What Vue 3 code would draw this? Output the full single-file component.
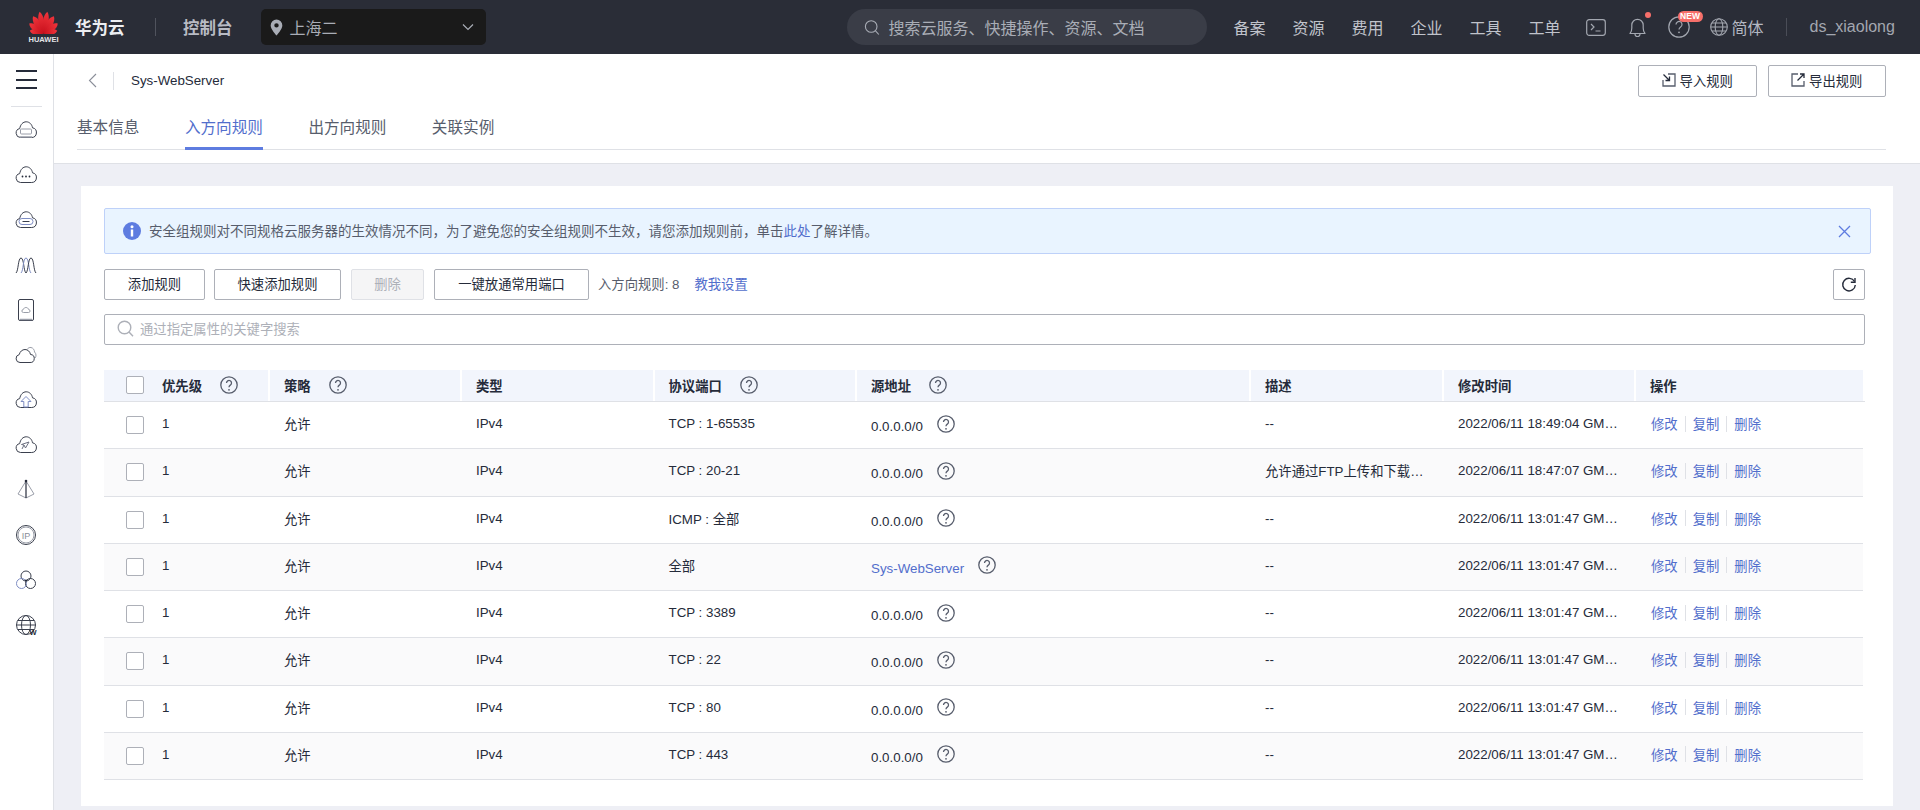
<script setup>
const navItems = ['备案', '资源', '费用', '企业', '工具', '工单']
const tabs = [
  { label: '基本信息' },
  { label: '入方向规则', active: true },
  { label: '出方向规则' },
  { label: '关联实例' }
]
const heads = [
  { label: '优先级', help: true, check: true },
  { label: '策略', help: true },
  { label: '类型' },
  { label: '协议端口', help: true },
  { label: '源地址', help: true },
  { label: '描述' },
  { label: '修改时间' },
  { label: '操作' }
]
const t = '2022/06/11 13:01:47 GM…'
const rules = [
  { port: 'TCP : 1-65535', source: '0.0.0.0/0', desc: '--', time: '2022/06/11 18:49:04 GM…' },
  { port: 'TCP : 20-21', source: '0.0.0.0/0', desc: '允许通过FTP上传和下载…', time: '2022/06/11 18:47:07 GM…' },
  { port: 'ICMP : 全部', source: '0.0.0.0/0', desc: '--', time: t },
  { port: '全部', source: 'Sys-WebServer', link: true, desc: '--', time: t },
  { port: 'TCP : 3389', source: '0.0.0.0/0', desc: '--', time: t },
  { port: 'TCP : 22', source: '0.0.0.0/0', desc: '--', time: t },
  { port: 'TCP : 80', source: '0.0.0.0/0', desc: '--', time: t },
  { port: 'TCP : 443', source: '0.0.0.0/0', desc: '--', time: t }
]
const petals = [
  { a: -78, l: 14.5, w: 3.8 },
  { a: -55, l: 18, w: 4.2 },
  { a: -31, l: 21, w: 4.4 },
  { a: -10, l: 23, w: 3.8 },
  { a: 10, l: 23, w: 3.8 },
  { a: 31, l: 21, w: 4.4 },
  { a: 55, l: 18, w: 4.2 },
  { a: 78, l: 14.5, w: 3.8 }
]
const petalPath = (p) => `M15 24C${15 - p.w} ${24 - p.l * 0.45} ${15 - p.w} ${24 - p.l * 0.8} 15 ${24 - p.l}C${15 + p.w} ${24 - p.l * 0.8} ${15 + p.w} ${24 - p.l * 0.45} 15 24Z`
const cloud = 'M6.500 19.500a4.500 4.500 0 0 1-.8-8.900C6.400 6.500 9 3.800 12.200 3.800c3.300 0 5.800 2.600 6.300 6a4.900 4.900 0 0 1-.8 9.700Z'
</script>

<template>
  <div class="app">
    <header class="topbar">
      <div class="logo">
        <svg class="flower" viewBox="0 0 30 24" width="29" height="24">
          <defs>
            <linearGradient id="petal" x1="0" y1="0" x2="0" y2="1">
              <stop offset="0" stop-color="#f0353c" />
              <stop offset="1" stop-color="#c8101c" />
            </linearGradient>
          </defs>
          <path v-for="p in petals" :key="p.a" :d="petalPath(p)" fill="url(#petal)" :transform="`rotate(${p.a} 15 24)`" />
        </svg>
        <span class="logo-word">HUAWEI</span>
      </div>
      <span class="brand">华为云</span>
      <i class="vline brand-line"></i>
      <span class="console">控制台</span>
      <div class="region">
        <svg viewBox="0 0 14 18" width="13" height="17"><path fill="#a9adb6" d="M7 0.500a6.300 6.300 0 0 0-6.300 6.300C.7 11 7 17.500 7 17.500s6.300-6.500 6.300-10.700A6.300 6.300 0 0 0 7 .5Zm0 8.600a2.400 2.400 0 1 1 0-4.800 2.400 2.400 0 0 1 0 4.800Z" /></svg>
        <span class="region-name">上海二</span>
        <svg class="chev" viewBox="0 0 12 8" width="12" height="8"><path d="M1 1.500l5 5 5-5" fill="none" stroke="#a9adb6" stroke-width="1.200" /></svg>
      </div>
      <div class="global-search">
        <svg viewBox="0 0 16 16" width="16" height="17"><circle cx="7.200" cy="7" r="5.800" fill="none" stroke="#a9adb6" stroke-width="1.100" /><path d="M11.500 11.300l3.300 3.700" stroke="#a9adb6" stroke-width="1.100" /></svg>
        <span>搜索云服务、快捷操作、资源、文档</span>
      </div>
      <nav class="nav">
        <a v-for="n in navItems" :key="n">{{ n }}</a>
      </nav>
      <svg class="term" viewBox="0 0 20 17" width="20" height="17">
        <rect x=".7" y=".7" width="18.600" height="15.600" rx="2.500" fill="none" stroke="#a3a7b0" stroke-width="1.200" />
        <path d="M5 5l3 3-3 3M9.500 12h5" fill="none" stroke="#a3a7b0" stroke-width="1.200" />
      </svg>
      <span class="bell">
        <svg viewBox="0 0 19 21" width="19" height="21">
          <path d="M2 16.500c1.500-1.500 1.800-3 1.800-5.500V8a5.700 5.700 0 0 1 11.400 0v3c0 2.500.3 4 1.800 5.500Z" fill="none" stroke="#a3a7b0" stroke-width="1.200" stroke-linejoin="round" />
          <path d="M7 17a2.500 2.500 0 0 0 5 0" fill="none" stroke="#a3a7b0" stroke-width="1.200" />
        </svg>
        <i class="dot"></i>
      </span>
      <span class="help-top">
        <svg viewBox="0 0 22 22" width="22" height="22">
          <circle cx="11" cy="11" r="10.200" fill="none" stroke="#a3a7b0" stroke-width="1.200" />
          <path d="M8 8.500a3 3 0 1 1 4.600 2.500c-1 .7-1.600 1.300-1.600 2.500" fill="none" stroke="#a3a7b0" stroke-width="1.200" />
          <circle cx="11" cy="16.300" r=".9" fill="#a3a7b0" />
        </svg>
        <b class="new">NEW</b>
      </span>
      <svg class="globe" viewBox="0 0 18 18" width="18" height="18">
        <g fill="none" stroke="#a3a7b0" stroke-width="1.100">
          <circle cx="9" cy="9" r="8.300" />
          <ellipse cx="9" cy="9" rx="3.800" ry="8.300" />
          <path d="M.7 9h16.600M1.800 5h14.400M1.800 13h14.400" />
        </g>
      </svg>
      <span class="lang">简体</span>
      <i class="vline user-line"></i>
      <span class="user">ds_xiaolong</span>
    </header>

    <div class="body">
      <aside class="sidebar">
        <div class="burger"><i></i><i></i><i></i></div>
        <div class="side-icon">
          <svg viewBox="0 0 24 24" width="24" height="24"><path :d="cloud" class="so" /><rect x="6.500" y="11" width="11" height="5" rx="1" class="si" /><path d="M6 19h12" class="si thick" /></svg>
        </div>
        <div class="side-icon">
          <svg viewBox="0 0 24 24" width="24" height="24"><path :d="cloud" class="so" /><circle cx="8.500" cy="13.500" r=".9" class="fd" /><circle cx="12" cy="13.500" r=".9" class="fd" /><circle cx="15.500" cy="13.500" r=".9" class="fd" /></svg>
        </div>
        <div class="side-icon">
          <svg viewBox="0 0 24 24" width="24" height="24"><path :d="cloud" class="so" /><rect x="5" y="10.500" width="14" height="6" rx="3" class="sb" /><path d="M8.500 13.500h7" class="sd" /></svg>
        </div>
        <div class="side-icon">
          <svg viewBox="0 0 24 24" width="24" height="24"><path d="M2 20c2.500-2 2-15 5-15s2.500 13 5 15" class="so" /><path d="M7 20c2.500-2 2-15 5-15s2.500 13 5 15" class="sb" /><path d="M12 20c2.500-2 2-15 5-15s2.500 13 5 15" class="so" /></svg>
        </div>
        <div class="side-icon">
          <svg viewBox="0 0 24 24" width="24" height="24"><rect x="4.500" y="1.500" width="15" height="21" rx="1.500" class="so" /><path d="M9.500 14.500a1.500 1.500 0 0 1-.2-3c.4-1.400 1.500-2 2.700-2s2.300.7 2.600 2a1.500 1.500 0 0 1-.1 3Z" class="si" /><path d="M6 21.500h12" class="si thick" /></svg>
        </div>
        <div class="side-icon">
          <svg viewBox="0 0 24 24" width="24" height="24"><path d="M13 6.500c1-1.500 2.500-2.300 4-2 2.300.5 3.500 2.500 3.500 4.500 1.800 1.500 2 4.500.5 6" class="si" /><path d="M6 19.500a4 4 0 0 1-.8-7.900C6 8.500 8.300 6.500 11 6.500s5 2 5.500 5a4 4 0 0 1-.5 8Z" class="so" /></svg>
        </div>
        <div class="side-icon">
          <svg viewBox="0 0 24 24" width="24" height="24"><path :d="cloud" class="so" /><path d="M12 8.500l-5 5h2.800V19h4.400v-5.500H17Z" class="sb" /></svg>
        </div>
        <div class="side-icon">
          <svg viewBox="0 0 24 24" width="24" height="24"><path :d="cloud" class="so" /><path d="M7.500 11.500L15 9l-3.500 6-1.500-3Zm2.500.500l-2 4" class="sg" /></svg>
        </div>
        <div class="side-icon">
          <svg viewBox="0 0 24 24" width="24" height="24"><path d="M12 3L4 16l8 4 8-4Z" class="si" /><path d="M12 3v17" class="so strong" /><circle cx="12" cy="3" r="1.300" class="fd" /></svg>
        </div>
        <div class="side-icon">
          <svg viewBox="0 0 24 24" width="24" height="24"><circle cx="12" cy="12" r="9.500" class="so" /><circle cx="12" cy="12" r="8" class="si" /><text x="12" y="15.500" text-anchor="middle" class="ip">IP</text></svg>
        </div>
        <div class="side-icon">
          <svg viewBox="0 0 24 24" width="24" height="24"><circle cx="12" cy="8" r="5" class="so" /><circle cx="7.500" cy="15.500" r="5" class="sb" /><circle cx="16.500" cy="15.500" r="5" class="so" /><circle cx="12" cy="12.500" r="1.100" class="fd" /></svg>
        </div>
        <div class="side-icon">
          <svg viewBox="0 0 24 24" width="24" height="24"><g class="so"><circle cx="12" cy="12" r="9.500" /><ellipse cx="12" cy="12" rx="4.500" ry="9.500" /><path d="M2.500 12h19M3.800 7.500h16.400M3.800 16.500h16.400" /></g><text x="19" y="22" text-anchor="middle" class="w">W</text></svg>
        </div>
      </aside>

      <main class="main">
        <section class="page-head">
          <div class="title-row">
            <svg class="back" viewBox="0 0 9 15" width="9" height="15"><path d="M8 1L1.500 7.500 8 14" fill="none" stroke="#8a8e99" stroke-width="1.100" /></svg>
            <i class="back-line"></i>
            <span class="title">Sys-WebServer</span>
            <div class="head-btns">
              <button class="btn head-btn">
                <svg viewBox="0 0 14 14" width="14" height="14"><path d="M6 1h7v12H1V7" fill="none" stroke="#575d6c" stroke-width="1.300" /><path d="M1.500 1.500l6 6M7.500 3.500v4h-4" fill="none" stroke="#252b3a" stroke-width="1.300" /></svg>
                导入规则
              </button>
              <button class="btn head-btn">
                <svg viewBox="0 0 14 14" width="14" height="14"><path d="M7 1H1v12h12V8" fill="none" stroke="#575d6c" stroke-width="1.300" /><path d="M6.500 7.500l6-6M9 1h4v4" fill="none" stroke="#252b3a" stroke-width="1.300" /></svg>
                导出规则
              </button>
            </div>
          </div>
          <div class="tabs">
            <a v-for="tab in tabs" :key="tab.label" class="tab" :class="{ active: tab.active }">{{ tab.label }}</a>
          </div>
        </section>

        <section class="card">
          <div class="alert">
            <svg viewBox="0 0 18 18" width="18" height="18"><circle cx="9" cy="9" r="9" fill="#5e7ce0" /><rect x="7.800" y="7.500" width="2.400" height="7" fill="#fff" /><circle cx="9" cy="4.800" r="1.500" fill="#fff" /></svg>
            <span class="alert-text">安全组规则对不同规格云服务器的生效情况不同，为了避免您的安全组规则不生效，请您添加规则前，单击<a class="link">此处</a>了解详情。</span>
            <svg class="close" viewBox="0 0 13 13" width="13" height="13"><path d="M1 1l11 11M12 1L1 12" stroke="#5e7ce0" stroke-width="1.300" /></svg>
          </div>

          <div class="toolbar">
            <button class="btn w-add">添加规则</button>
            <button class="btn w-quick">快速添加规则</button>
            <button class="btn w-del" disabled>删除</button>
            <button class="btn w-open">一键放通常用端口</button>
            <span class="count">入方向规则: 8</span>
            <a class="link teach">教我设置</a>
            <button class="btn refresh" aria-label="刷新">
              <svg viewBox="0 0 16 16" width="16" height="16"><path d="M13.500 4.500A6.300 6.300 0 1 0 14.300 8" fill="none" stroke="#252b3a" stroke-width="1.400" /><path d="M14 1v4.300H9.800" fill="none" stroke="#252b3a" stroke-width="1.400" /></svg>
            </button>
          </div>

          <div class="filter">
            <svg viewBox="0 0 17 17" width="17" height="17"><circle cx="7.500" cy="7.500" r="6.300" fill="none" stroke="#adb0b8" stroke-width="1.400" /><path d="M12 12l4 4.300" stroke="#adb0b8" stroke-width="1.400" /></svg>
            <span>通过指定属性的关键字搜索</span>
          </div>

          <div class="table">
            <div class="thead row-grid">
              <div v-for="h in heads" :key="h.label" class="th">
                <i v-if="h.check" class="checkbox head-check"></i>
                <span>{{ h.label }}</span>
                <svg v-if="h.help" class="q" viewBox="0 0 18 18" width="18" height="18"><circle cx="9" cy="9" r="8.200" fill="none" stroke="#575d6c" stroke-width="1.300" /><path d="M6.500 7a2.500 2.500 0 1 1 3.800 2.100c-.9.600-1.300 1.100-1.300 2.200" fill="none" stroke="#575d6c" stroke-width="1.300" /><circle cx="9" cy="13.800" r=".9" fill="#575d6c" /></svg>
              </div>
            </div>
            <div v-for="(r, i) in rules" :key="i" class="tr row-grid" :class="{ alt: i % 2 === 1 }">
              <div class="td"><i class="checkbox"></i><span>1</span></div>
              <div class="td">允许</div>
              <div class="td">IPv4</div>
              <div class="td">{{ r.port }}</div>
              <div class="td">
                <span class="src" :class="{ link: r.link }">{{ r.source }}</span>
                <svg class="q src-q" viewBox="0 0 18 18" width="18" height="18"><circle cx="9" cy="9" r="8.200" fill="none" stroke="#575d6c" stroke-width="1.300" /><path d="M6.500 7a2.500 2.500 0 1 1 3.800 2.100c-.9.600-1.300 1.100-1.300 2.200" fill="none" stroke="#575d6c" stroke-width="1.300" /><circle cx="9" cy="13.800" r=".9" fill="#575d6c" /></svg>
              </div>
              <div class="td">{{ r.desc }}</div>
              <div class="td">{{ r.time }}</div>
              <div class="td ops"><a class="link">修改</a><i></i><a class="link">复制</a><i></i><a class="link">删除</a></div>
            </div>
          </div>
        </section>
      </main>
    </div>
  </div>
</template>

<style>
html, body { margin: 0; padding: 0; overflow: hidden; }
</style>

<style scoped>
* { box-sizing: border-box; }
.app {
  width: 1920px;
  height: 810px;
  overflow: hidden;
  display: flex;
  flex-direction: column;
  font-family: "Liberation Sans", "Noto Sans CJK SC", sans-serif;
  font-size: 13.33px;
  color: #252b3a;
  background: #eeeff5;
}
i { display: block; font-style: normal; }
.link { color: #526ecc; }

.topbar {
  flex: 0 0 54px;
  display: flex;
  align-items: center;
  padding-left: 29px;
  background: #2a2d37;
  color: #c0c3cb;
  font-size: 16px;
}
.logo { width: 29px; display: flex; flex-direction: column; align-items: center; }
.flower { display: block; }
.logo-word { font-size: 7.500px; font-weight: 700; color: #e3e4e8; line-height: 9px; margin-top: 1px; letter-spacing: 0; }
.brand { margin-left: 17px; font-weight: 700; color: #eceef2; width: 50px; white-space: nowrap; font-size: 16.500px; }
.vline { width: 1px; height: 18px; background: #50535d; }
.brand-line { margin-left: 30px; }
.console { margin-left: 27px; font-weight: 700; color: #b8bbc4; white-space: nowrap; font-size: 16.500px; }
.region {
  margin-left: 28px;
  width: 225px;
  height: 36px;
  border-radius: 5px;
  background: #1a1a1a;
  display: flex;
  align-items: center;
  padding-left: 9px;
  color: #a9adb6;
}
.region-name { margin-left: 7px; }
.chev { margin-left: auto; margin-right: 12px; }
.global-search {
  margin-left: 361px;
  width: 360px;
  height: 36px;
  border-radius: 18px;
  background: #3a3d47;
  display: flex;
  align-items: center;
  padding-left: 17px;
  gap: 9px;
  color: #a9adb6;
  white-space: nowrap;
}
.nav { margin-left: 27px; display: flex; gap: 27px; }
.nav a { width: 32px; white-space: nowrap; color: #c0c3cb; }
.term { margin-left: 25px; }
.bell { margin-left: 22px; position: relative; display: block; height: 21px; }
.bell svg, .help-top svg { display: block; }
.dot { position: absolute; right: -4px; top: -5px; width: 6px; height: 6px; border-radius: 50%; background: #f66f6a; }
.help-top { margin-left: 21px; position: relative; display: block; height: 22px; }
.new {
  position: absolute;
  left: 10px;
  top: -5px;
  width: 25px;
  height: 11px;
  border-radius: 6px;
  background: #f66f6a;
  color: #fff;
  font-size: 8.500px;
  line-height: 11px;
  text-align: center;
}
.globe { margin-left: 20px; }
.lang { margin-left: 4px; color: #b4b8c2; white-space: nowrap; }
.user-line { margin-left: 22px; background: #4a4d57; }
.user { margin-left: 23px; color: #a3a7b0; }

.body { flex: 1; display: flex; min-height: 0; }
.sidebar {
  flex: 0 0 54px;
  background: #fff;
  border-right: 1px solid #dfe1e6;
  display: flex;
  flex-direction: column;
}
.burger {
  width: 31px;
  height: 53px;
  margin-left: 11px;
  padding: 16px 5px 0;
  border-bottom: 1px solid #dfe1e6;
}
.burger i { height: 2px; background: #252b3a; margin-bottom: 6.500px; }
.side-icon { height: 45px; display: flex; align-items: center; justify-content: center; padding-right: 1px; }
.so { fill: none; stroke: #3a3f4d; stroke-width: 1; }
.so.strong { stroke: #252b3a; stroke-width: 1.200; }
.si { fill: none; stroke: #9a9ea9; stroke-width: 1; }
.si.thick { stroke-width: 1.500; }
.sb { fill: none; stroke: #7f8ec4; stroke-width: 1; }
.sd { fill: none; stroke: #3a3f4d; stroke-width: 1; }
.sg { fill: none; stroke: #6c7080; stroke-width: 1; }
.fd { fill: #252b3a; }
.ip { font-size: 9px; fill: #8a8e99; font-family: "Liberation Sans", sans-serif; }
.w { font-size: 7.500px; font-weight: 700; fill: #252b3a; font-family: "Liberation Sans", sans-serif; }

.main { flex: 1; min-width: 0; display: flex; flex-direction: column; }
.page-head {
  flex: 0 0 110px;
  background: #fff;
  border-bottom: 1px solid #dfe1e6;
  padding: 11px 34px 0 23px;
}
.title-row { display: flex; align-items: center; height: 32px; padding-left: 11px; }
.back { display: block; margin-bottom: 1px; }
.back-line { width: 1px; height: 18px; margin-left: 16px; background: #dfe1e6; }
.title { margin-left: 17px; margin-bottom: 2px; }
.head-btns { margin-left: auto; display: flex; gap: 11px; }
.btn {
  font: inherit;
  color: #252b3a;
  background: #fff;
  border: 1px solid #adb0b8;
  border-radius: 2px;
  height: 31px;
  padding: 0 0 2px;
  white-space: nowrap;
}
.head-btn {
  width: 118.500px;
  height: 32px;
  display: flex;
  align-items: center;
  justify-content: center;
  gap: 4px;
}
.tabs {
  margin-top: 18px;
  height: 35px;
  display: flex;
  gap: 45.500px;
  border-bottom: 1px solid #dfe1e6;
  font-size: 15.600px;
  color: #575d6c;
}
.tab { height: 35px; line-height: 26px; }
.tab.active { color: #526ecc; border-bottom: 3px solid #5e7ce0; }

.card {
  margin: 22px 27px 0;
  width: 1812px;
  height: 620px;
  background: #fff;
  padding: 22px 28px 0 23px;
}
.alert {
  height: 46px;
  margin-right: -6px;
  background: #e9f4ff;
  border: 1px solid #bed1f9;
  border-radius: 2px;
  display: flex;
  align-items: center;
  padding-left: 18px;
  color: #575d6c;
  font-size: 13.500px;
}
.alert-text { margin-left: 8px; margin-bottom: 2px; }
.close { margin-left: auto; margin-right: 19px; }

.toolbar { margin-top: 15px; display: flex; align-items: center; color: #575d6c; }
.w-add { width: 101px; }
.w-quick { width: 127px; margin-left: 9px; }
.w-del { width: 73px; margin-left: 10px; background: #f5f5f6; border-color: #dfe1e6; color: #adb0b8; }
.w-open { width: 155px; margin-left: 10px; }
.count { margin-left: 9px; margin-bottom: 2px; }
.teach { margin-left: 15px; margin-bottom: 2px; }
.refresh { margin-left: auto; width: 32px; display: flex; align-items: center; justify-content: center; padding: 0; }
.refresh svg { display: block; }

.filter {
  margin-top: 14px;
  height: 31px;
  border: 1px solid #adb0b8;
  border-radius: 2px;
  display: flex;
  align-items: center;
  padding: 0 0 2px 12px;
  gap: 6px;
  color: #adb0b8;
}

.table { margin-top: 25px; }
.row-grid {
  display: grid;
  grid-template-columns: 166px 192px 192.500px 202.500px 394px 193px 192px 229px;
}
.thead { height: 32px; background: #f2f5fc; border-bottom: 1px solid #dfe1e6; }
.th {
  display: flex;
  align-items: center;
  padding: 0 0 1px 14px;
  font-weight: 700;
  border-right: 2px solid #fff;
}
.th .q { margin-left: 18px; }
.th:first-child { padding-left: 22px; }
.q { display: block; flex: none; }
.checkbox {
  flex: none;
  width: 18px;
  height: 18px;
  margin-right: 18px;
  background: #fff;
  border: 1px solid #adb0b8;
  border-radius: 2px;
}
.tr {
  height: 47.250px;
  margin-right: 2px;
  border-bottom: 1px solid #dfe1e6;
  grid-template-columns: 166px 192px 192.500px 202.500px 394px 193px 192px 227px;
}
.tr.alt { background: #fafafb; }
.td {
  display: flex;
  align-items: center;
  padding: 0 14px 3px;
  min-width: 0;
  white-space: nowrap;
}
.td:first-child { padding-left: 22px; }
.td:first-child .checkbox { margin-top: 3px; }
.src { margin-top: 6px; }
.src-q { margin-left: 14px; }
.ops { padding-left: 15px; }
.ops i { width: 1px; height: 16px; margin: 0 7px; background: #dfe1e6; }
</style>
